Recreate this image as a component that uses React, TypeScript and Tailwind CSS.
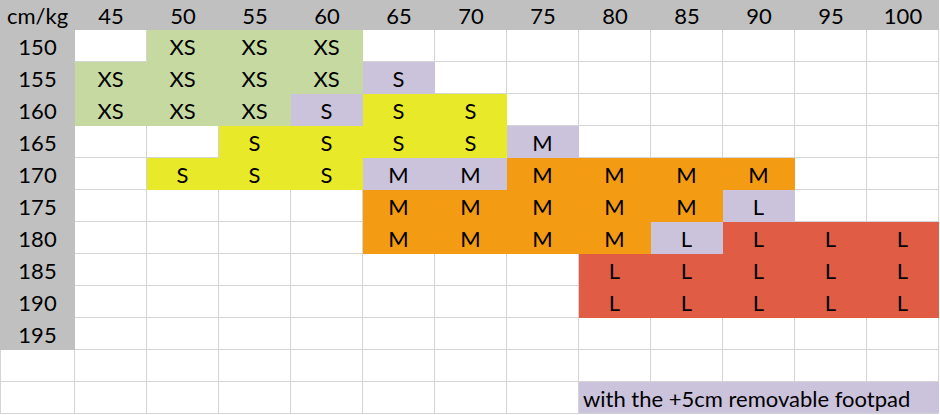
import React from "react";

const G = "#c6d9a1";
const P = "#cbc2dc";
const Y = "#e8e929";
const O = "#f39b13";
const R = "#e15c45";

type Cell = [string, string] | null;

const weights = ["45", "50", "55", "60", "65", "70", "75", "80", "85", "90", "95", "100"];

const e: Cell = null;
const rows: { h: string; cells: Cell[] }[] = [
  { h: "150", cells: [e, ["XS", G], ["XS", G], ["XS", G], e, e, e, e, e, e, e, e] },
  { h: "155", cells: [["XS", G], ["XS", G], ["XS", G], ["XS", G], ["S", P], e, e, e, e, e, e, e] },
  { h: "160", cells: [["XS", G], ["XS", G], ["XS", G], ["S", P], ["S", Y], ["S", Y], e, e, e, e, e, e] },
  { h: "165", cells: [e, e, ["S", Y], ["S", Y], ["S", Y], ["S", Y], ["M", P], e, e, e, e, e] },
  { h: "170", cells: [e, ["S", Y], ["S", Y], ["S", Y], ["M", P], ["M", P], ["M", O], ["M", O], ["M", O], ["M", O], e, e] },
  { h: "175", cells: [e, e, e, e, ["M", O], ["M", O], ["M", O], ["M", O], ["M", O], ["L", P], e, e] },
  { h: "180", cells: [e, e, e, e, ["M", O], ["M", O], ["M", O], ["M", O], ["L", P], ["L", R], ["L", R], ["L", R]] },
  { h: "185", cells: [e, e, e, e, e, e, e, ["L", R], ["L", R], ["L", R], ["L", R], ["L", R]] },
  { h: "190", cells: [e, e, e, e, e, e, e, ["L", R], ["L", R], ["L", R], ["L", R], ["L", R]] },
  { h: "195", cells: [e, e, e, e, e, e, e, e, e, e, e, e] },
];

export default function App() {
  return (
    <div
      className="w-[940px] h-[415px] bg-white text-black text-[22px] leading-none overflow-hidden"
      style={{ fontFamily: "Lato, 'Open Sans', sans-serif" }}
    >
      <div className="grid grid-cols-[75px_repeat(12,72px)]">
        {/* header */}
        <div className="h-[30px] bg-[#c0c0c0] flex items-center justify-center pt-[1px]">cm/kg</div>
        {weights.map((w) => (
          <div key={w} className="h-[30px] bg-[#c0c0c0] flex items-center justify-center pt-[1px]">
            {w}
          </div>
        ))}
        {rows.map((r) => (
          <React.Fragment key={r.h}>
            <div className="h-[32px] bg-[#c0c0c0] flex items-center justify-center pt-[2px]">{r.h}</div>
            {r.cells.map((c, i) => (
              <div
                key={i}
                className="h-[32px] border-r border-b flex items-center justify-center pt-[2px]"
                style={{
                  backgroundColor: c ? c[1] : "#ffffff",
                  borderColor: c ? c[1] : "#d4d4d4",
                }}
              >
                {c ? c[0] : ""}
              </div>
            ))}
          </React.Fragment>
        ))}
        {/* empty row */}
        <div className="h-[32px] border-l border-r border-b border-[#d4d4d4]" />
        {weights.map((w) => (
          <div key={"e1" + w} className="h-[32px] border-r border-b border-[#d4d4d4]" />
        ))}
        {/* footpad row */}
        <div className="h-[32px] border-l border-r border-b border-[#d4d4d4]" />
        {weights.slice(0, 7).map((w) => (
          <div key={"e2" + w} className="h-[32px] border-r border-b border-[#d4d4d4]" />
        ))}
        <div className="col-span-5 h-[32px] bg-[#cbc2dc] border-b border-[#d4d4d4] flex items-center pl-[4px] pt-[2px] whitespace-nowrap">
          with the +5cm removable footpad
        </div>
      </div>
    </div>
  );
}
